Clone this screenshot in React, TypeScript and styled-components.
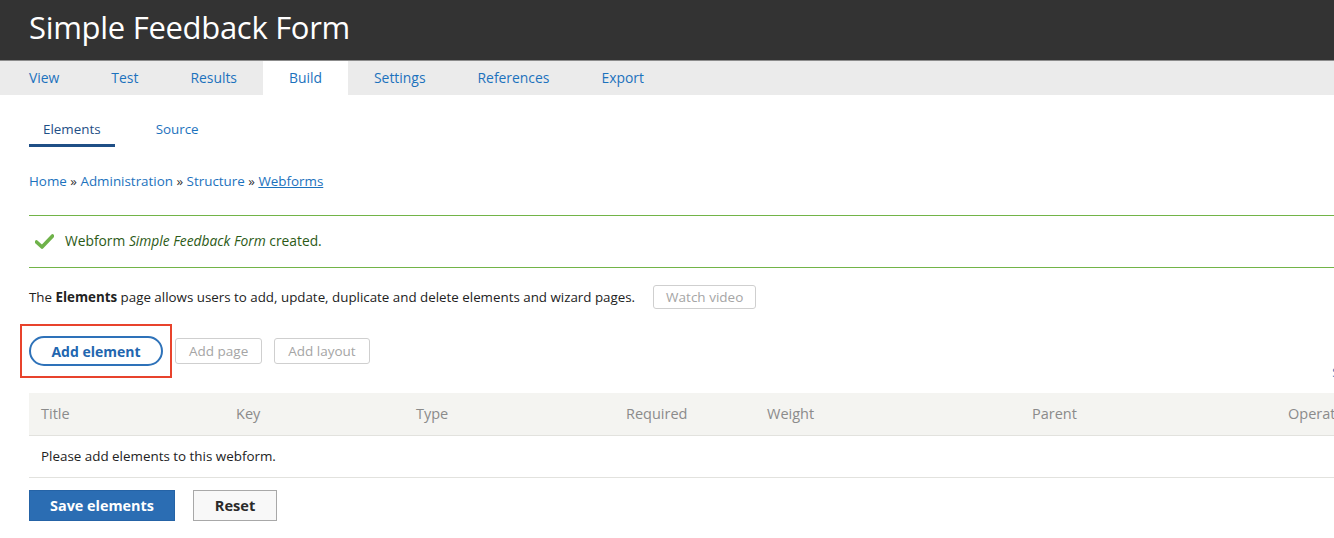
import React from "react";
import styled, { createGlobalStyle } from "styled-components";

const Global = createGlobalStyle`
  html, body { margin: 0; padding: 0; background: #fff; overflow: hidden; }
  body { font-family: "Open Sans", "Noto Sans", sans-serif; color: #222; }
  * { box-sizing: border-box; }
`;

const Page = styled.div`
  width: 1334px;
  overflow: hidden;
`;

const Header = styled.header`
  height: 61px;
  background: #333;
  border-bottom: 1px solid #8c8c8c;
  display: flex;
  align-items: center;
  padding: 0 0 6px 29px;
`;

const Title = styled.h1`
  margin: 0;
  color: #fff;
  font-size: 31px;
  font-weight: 400;
  letter-spacing: -0.3px;
`;

const TabBar = styled.nav`
  display: flex;
  height: 34px;
  background: #ebebeb;
  padding-left: 3px;
`;

const Tab = styled.a<{ $active?: boolean }>`
  display: block;
  padding: 0 26px;
  line-height: 34px;
  font-size: 13.9px;
  color: #1c72bd;
  text-decoration: none;
  background: ${(p) => (p.$active ? "#fff" : "transparent")};
`;

const Content = styled.main`
  width: 1416px;
  margin-left: 29px;
`;

const SubTabs = styled.div`
  display: flex;
  gap: 27px;
`;

const SubTab = styled.a<{ $active?: boolean }>`
  display: block;
  padding: 22px 14px 3px;
  line-height: 24px;
  font-size: 13.4px;
  color: ${(p) => (p.$active ? "#1f4f86" : "#1c72bd")};
  border-bottom: 3px solid ${(p) => (p.$active ? "#1f4f86" : "transparent")};
  text-decoration: none;
`;

const Breadcrumb = styled.div`
  margin-top: 24px;
  line-height: 20px;
  font-size: 13.4px;
  color: #333;
`;

const Crumb = styled.a<{ $underline?: boolean }>`
  color: #1c72bd;
  text-decoration: ${(p) => (p.$underline ? "underline" : "none")};
`;

const Message = styled.div`
  margin-top: 24px;
  border-top: 1px solid #72b447;
  border-bottom: 1px solid #72b447;
  padding: 15px 0 16px 6px;
  display: flex;
  align-items: center;
  gap: 11px;
  line-height: 20px;
  font-size: 13.8px;
  color: #2c5a16;
`;

const Description = styled.div`
  margin-top: 17px;
  display: flex;
  align-items: center;
  gap: 18px;
  font-size: 13.35px;
  line-height: 24px;
  color: #222;
`;

const GhostButton = styled.button<{ $h?: number; $px?: number }>`
  height: ${(p) => p.$h ?? 26}px;
  padding: 0 ${(p) => p.$px ?? 13}px;
  font-family: inherit;
  font-size: 13.5px;
  color: #a5a5a5;
  background: #fff;
  border: 1px solid #cfcfcf;
  border-radius: 3px;
`;

const ButtonRow = styled.div`
  margin-top: 27px;
  height: 30px;
  display: flex;
  align-items: center;
  gap: 12px;
`;

const Highlight = styled.div`
  position: relative;
  &::after {
    content: "";
    position: absolute;
    left: -9px;
    right: -9px;
    top: -12px;
    bottom: -12px;
    border: 2px solid #e8432c;
    pointer-events: none;
  }
`;

const PillButton = styled.button`
  width: 134px;
  height: 30px;
  border: 2px solid #2e72b9;
  border-radius: 16px;
  background: #fff;
  color: #2266af;
  font-family: inherit;
  font-size: 14px;
  font-weight: 700;
`;

const WeightsRow = styled.div`
  margin-top: -4px;
  height: 20px;
  line-height: 20px;
  text-align: right;
  font-size: 13.4px;
`;

const WeightsLink = styled.a`
  color: #1c72bd;
  text-decoration: none;
`;

const Table = styled.table`
  margin-top: 11px;
  width: 100%;
  border-collapse: collapse;
  table-layout: fixed;
  font-size: 14.5px;
`;

const Th = styled.th<{ $w: number }>`
  width: ${(p) => p.$w}px;
  height: 42px;
  padding: 0 12px;
  text-align: left;
  font-weight: 400;
  color: #8b8b8b;
  background: #f4f4f1;
  border-bottom: 1px solid #e2e2de;
`;

const Td = styled.td`
  height: 42px;
  padding: 0 12px;
  font-size: 13.4px;
  color: #222;
  border-bottom: 1px solid #e2e2de;
`;

const Actions = styled.div`
  margin-top: 12px;
  display: flex;
  gap: 18px;
`;

const PrimaryButton = styled.button`
  width: 146px;
  height: 31px;
  background: #2b6db3;
  border: 1px solid #2563a6;
  color: #fff;
  font-family: inherit;
  font-size: 14.4px;
  font-weight: 700;
`;

const SecondaryButton = styled.button`
  width: 84px;
  height: 31px;
  background: #f8f8f8;
  border: 1px solid #a8a8a8;
  color: #2a2a2a;
  font-family: inherit;
  font-size: 14.6px;
  font-weight: 700;
`;

const CheckIcon = () => (
  <svg width="19" height="15" viewBox="0 0 19 15">
    <path d="M1.5 8 L7 13 L17.5 2" fill="none" stroke="#6fb24a" strokeWidth="3.6" strokeLinecap="round" strokeLinejoin="round" />
  </svg>
);

const columns: [string, number][] = [
  ["Title", 195],
  ["Key", 180],
  ["Type", 210],
  ["Required", 141],
  ["Weight", 265],
  ["Parent", 256],
  ["Operations", 169],
];

export default function App() {
  return (
    <Page>
      <Global />
      <Header>
        <Title>Simple Feedback Form</Title>
      </Header>
      <TabBar>
        {["View", "Test", "Results", "Build", "Settings", "References", "Export"].map((t) => (
          <Tab key={t} $active={t === "Build"}>{t}</Tab>
        ))}
      </TabBar>
      <Content>
        <SubTabs>
          <SubTab $active>Elements</SubTab>
          <SubTab>Source</SubTab>
        </SubTabs>
        <Breadcrumb>
          <Crumb>Home</Crumb> » <Crumb>Administration</Crumb> » <Crumb>Structure</Crumb> »{" "}
          <Crumb $underline>Webforms</Crumb>
        </Breadcrumb>
        <Message>
          <CheckIcon />
          <span>
            Webform <em>Simple Feedback Form</em> created.
          </span>
        </Message>
        <Description>
          <span>
            The <b>Elements</b> page allows users to add, update, duplicate and delete elements and wizard pages.
          </span>
          <GhostButton $h={24} $px={12}>Watch video</GhostButton>
        </Description>
        <ButtonRow>
          <Highlight>
            <PillButton>Add element</PillButton>
          </Highlight>
          <GhostButton>Add page</GhostButton>
          <GhostButton>Add layout</GhostButton>
        </ButtonRow>
        <WeightsRow>
          <WeightsLink>Show row weights</WeightsLink>
        </WeightsRow>
        <Table>
          <thead>
            <tr>
              {columns.map(([c, w]) => (
                <Th key={c} $w={w}>{c}</Th>
              ))}
            </tr>
          </thead>
          <tbody>
            <tr>
              <Td colSpan={7}>Please add elements to this webform.</Td>
            </tr>
          </tbody>
        </Table>
        <Actions>
          <PrimaryButton>Save elements</PrimaryButton>
          <SecondaryButton>Reset</SecondaryButton>
        </Actions>
      </Content>
    </Page>
  );
}
